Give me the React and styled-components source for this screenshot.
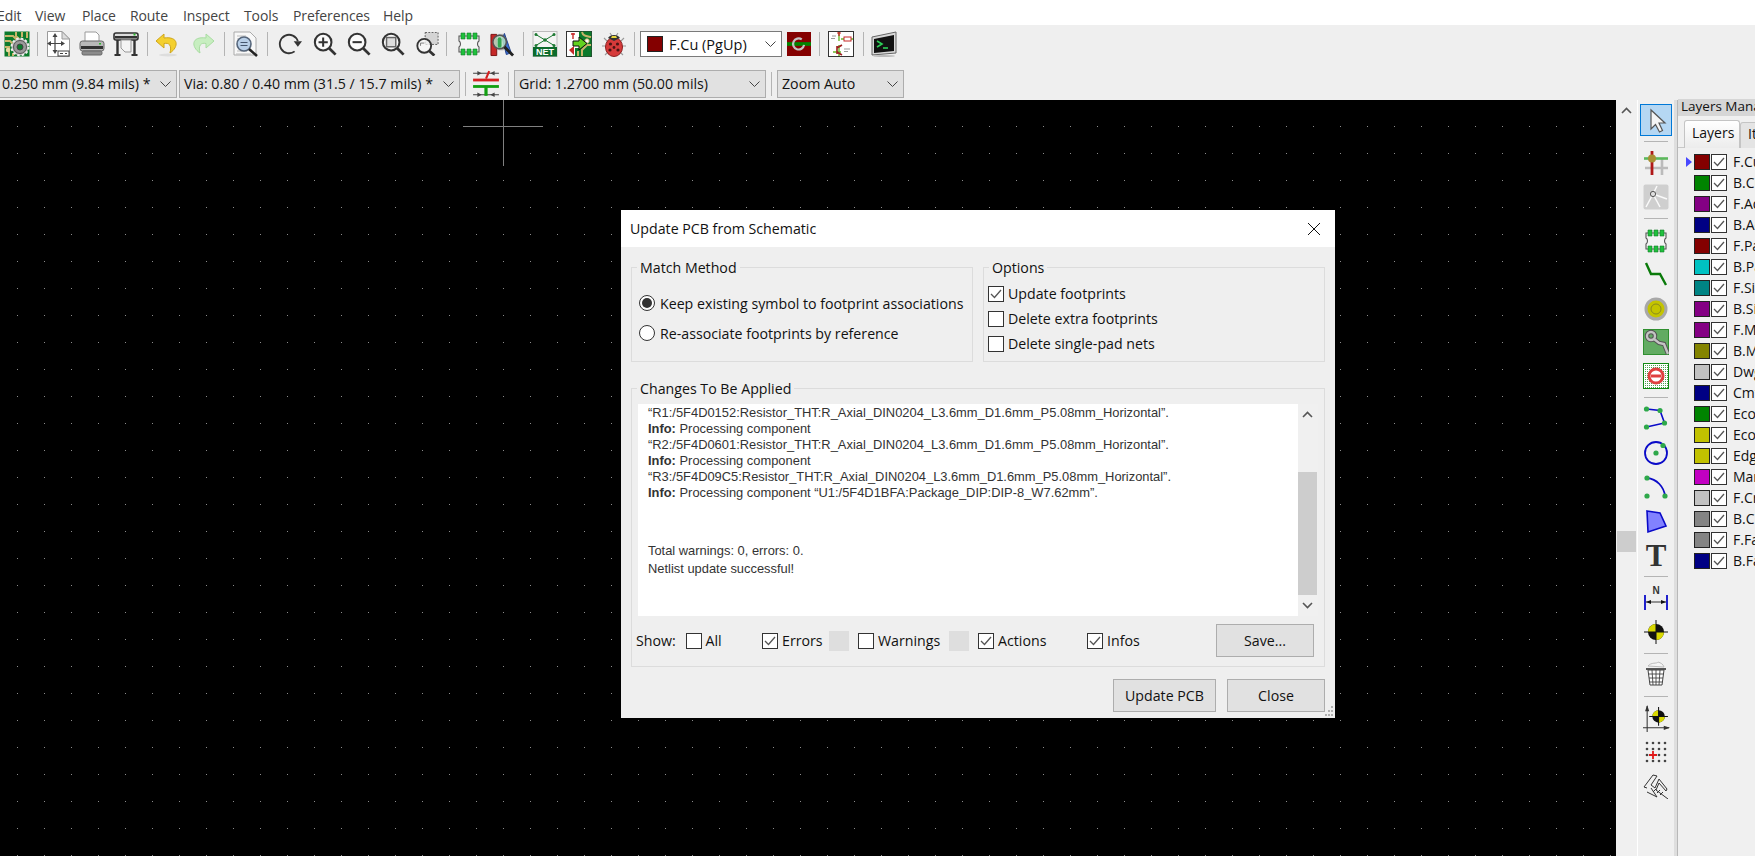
import styled, { createGlobalStyle } from 'styled-components'

const GlobalStyle = createGlobalStyle`
    html, body, #root {
        margin: 0;
        height: 100%;
        overflow: hidden;
    }
    body {
        font-family: "Open Sans", "Noto Sans", sans-serif;
        color: #111;
        background: #efefef;
    }
`

const Page = styled.div`
    display: flex;
    flex-direction: column;
    height: 856px;
    width: 1755px;
    overflow: hidden;
`

const MenuBar = styled.div`
    display: flex;
    align-items: center;
    height: 25px;
    box-sizing: border-box;
    background: #fff;
    flex: none;
    padding: 5px 0 0 35px;
    position: relative;
`

const MenuItem = styled.span`
    width: ${props => props.$w}px;
    font-size: 14px;
    letter-spacing: -0.1px;
    color: #444;
    white-space: nowrap;
    margin-left: ${props => props.$ml || 0}px;
`

const ToolRow = styled.div`
    display: flex;
    align-items: center;
    flex: none;
    height: ${props => props.$h}px;
    padding-top: ${props => props.$pt || 0}px;
    box-sizing: border-box;
    background: #efefef;
`

const Tool = styled.div`
    width: ${props => props.$w}px;
    flex: none;
    display: flex;
    align-items: center;
    justify-content: center;
`

const VSep = styled.div`
    width: ${props => props.$w}px;
    height: 24px;
    flex: none;
    display: flex;
    justify-content: center;
    &::before {
        content: '';
        width: 1px;
        background: #b4b4b4;
    }
`

const Combo = styled.div`
    width: ${props => props.$w}px;
    margin-left: ${props => props.$ml || 0}px;
    height: 28px;
    flex: none;
    box-sizing: border-box;
    display: flex;
    align-items: center;
    justify-content: space-between;
    padding: 0 5px 0 ${props => props.$pl || 4}px;
    background: #e1e1e1;
    border: 1px solid #adadad;
    font-size: 14.2px;
    white-space: nowrap;
`

const LayerCombo = styled(Combo)`
    height: 26px;
    background: #fff;
    border-color: #7a7a7a;
    padding-left: 6px;
    font-size: 14.5px;
`

const LayerPick = styled.span`
    display: flex;
    align-items: center;
    gap: 6px;
`

const Chevron = () => (
	<svg width='11' height='6' viewBox='0 0 11 6' fill='none' stroke='#444' strokeWidth='1'>
		<path d='M0.5 0.5 L5.5 5.5 L10.5 0.5' />
	</svg>
)

const Main = styled.div`
    flex: 1;
    display: flex;
    min-height: 0;
`

const Canvas = styled.div`
    flex: 1;
    min-width: 0;
    position: relative;
    overflow: hidden;
    background-color: #000;
    background-image: conic-gradient(from 270deg at 1px 1px, #8c8c8c 90deg, #000 0);
    background-size: 27px 27px;
    background-position: 17px 26px;
`

const CrossH = styled.div`
    position: absolute;
    left: 463px;
    top: 26px;
    width: 80px;
    height: 1px;
    background: #808080;
`

const CrossV = styled.div`
    position: absolute;
    left: 503px;
    top: 0;
    width: 1px;
    height: 66px;
    background: #808080;
`

const CanvasScroll = styled.div`
    width: 22px;
    box-sizing: border-box;
    flex: none;
    background: #f0f0f0;
    border-right: 1px solid #fff;
    display: flex;
    flex-direction: column;
    align-items: center;
`

const ScrollArrow = styled.div`
    width: ${props => props.$w || 19}px;
    height: 20px;
    display: flex;
    align-items: center;
    justify-content: center;
    flex: none;
`

const CanvasThumb = styled.div`
    width: 19px;
    height: 21px;
    margin-top: 411px;
    background: #cdcdcd;
`

const Rail = styled.div`
    width: 36px;
    flex: none;
    background: #f0f0f0;
    display: flex;
    flex-direction: column;
    align-items: center;
`

const RailTool = styled.div`
    height: ${props => props.$h}px;
    margin-top: ${props => props.$mt}px;
    width: 100%;
    flex: none;
    display: flex;
    align-items: center;
    justify-content: center;
`

const ActiveTool = styled.div`
    margin-top: 4px;
    width: 32px;
    height: 32px;
    box-sizing: border-box;
    flex: none;
    background: #b5d7f3;
    border: 1px solid #0078d7;
    display: flex;
    align-items: center;
    justify-content: center;
`

const RailSep = styled.div`
    width: 24px;
    height: 1px;
    flex: none;
    margin-top: ${props => props.$mt}px;
    background: #b4b4b4;
`

const Splitter = styled.div`
    width: 4px;
    box-sizing: border-box;
    flex: none;
    background: #dedede;
    border-right: 1px solid #b8b8b8;
`

const LayersPanel = styled.div`
    width: 77px;
    flex: none;
    overflow: hidden;
    background: #f0f0f0;
    margin-top: -1px;
`

const PanelTitle = styled.div`
    height: 17px;
    line-height: 15px;
    padding-left: 3px;
    background: #d6d6d6;
    font-size: 13.5px;
    white-space: nowrap;
`

const TabBar = styled.div`
    display: flex;
    align-items: flex-end;
    height: 32px;
    padding-left: 6px;
    border-bottom: 1px solid #c8c8c8;
    box-sizing: border-box;
`

const Tab = styled.div`
    flex: none;
    height: ${props => (props.$active ? 28 : 26)}px;
    width: ${props => props.$w}px;
    box-sizing: border-box;
    padding: ${props => (props.$active ? '2px 0 0 7px' : '1px 0 0 7px')};
    margin-bottom: -1px;
    font-size: 14px;
    border: 1px solid #c4c4c4;
    border-bottom: 0;
    border-radius: 3px 3px 0 0;
    background: ${props => (props.$active ? 'linear-gradient(#fff, #ececec)' : '#e4e4e4')};
    overflow: hidden;
`

const LayerList = styled.div`
    display: flex;
    flex-direction: column;
    padding: 3px 0 0 8px;
`

const LayerRow = styled.div`
    display: flex;
    align-items: center;
    height: 21px;
    white-space: nowrap;
`

const ActiveMark = styled.div`
    width: 8px;
    flex: none;
    height: 10px;
    &::before {
        content: '';
        display: ${props => (props.$on ? 'block' : 'none')};
        width: 0;
        height: 0;
        border-left: 6px solid #4848ff;
        border-top: 5px solid transparent;
        border-bottom: 5px solid transparent;
    }
`

const Swatch = styled.div`
    width: 16px;
    height: 16px;
    box-sizing: border-box;
    flex: none;
    border: 1px solid #222;
    background: ${props => props.$color};
`

const LayerName = styled.span`
    margin-left: 6px;
    font-size: 14px;
`

const CheckBox = styled.span`
    width: 16px;
    height: 16px;
    box-sizing: border-box;
    flex: none;
    border: 1px solid #333;
    background: #fff;
    display: inline-flex;
    align-items: center;
    justify-content: center;
    margin-left: ${props => props.$ml || 0}px;
`

const Tick = () => (
	<svg width='12' height='10' viewBox='0 0 12 10' fill='none' stroke='#555' strokeWidth='1.3'>
		<path d='M1 5 L4.5 8.5 L11 1' />
	</svg>
)

const Check = ({ on, ml }) => <CheckBox $ml={ml}>{on && <Tick />}</CheckBox>

const Dialog = styled.div.attrs({ role: 'dialog' })`
    position: absolute;
    left: 621px;
    top: 110px;
    width: 714px;
    height: 508px;
    background: #efefef;
    display: flex;
    flex-direction: column;
`

const TitleBar = styled.div`
    height: 37px;
    flex: none;
    background: #fff;
    display: flex;
    align-items: center;
    justify-content: space-between;
    padding: 0 14px 0 9px;
    font-size: 14.2px;
`

const DialogBody = styled.div`
    flex: 1;
    padding: 20px 10px 0;
    display: flex;
    flex-direction: column;
`

const TopGroups = styled.div`
    display: grid;
    grid-template-columns: 342px 342px;
    column-gap: 10px;
`

const GroupBox = styled.div`
    border: 1px solid #dcdcdc;
    box-sizing: border-box;
    height: ${props => props.$h}px;
    margin-top: ${props => props.$mt || 0}px;
`

const GroupLabel = styled.div`
    display: table;
    height: 22px;
    line-height: 22px;
    margin: -11px 0 0 5px;
    padding: 0 3px;
    background: #efefef;
    font-size: 14.2px;
`

const RadioList = styled.div`
    margin: 9px 0 0 7px;
`

const OptionRow = styled.label`
    display: flex;
    align-items: center;
    height: ${props => props.$h}px;
    gap: ${props => props.$gap}px;
    font-size: 14.2px;
    white-space: nowrap;
`

const RadioDot = styled.span`
    width: 16px;
    height: 16px;
    box-sizing: border-box;
    flex: none;
    border-radius: 50%;
    border: 1px solid #333;
    background: #fff;
    display: flex;
    align-items: center;
    justify-content: center;
    &::before {
        content: '';
        display: ${props => (props.$on ? 'block' : 'none')};
        width: 10px;
        height: 10px;
        border-radius: 50%;
        background: #333;
    }
`

const CheckList = styled.div`
    margin: 2px 0 0 4px;
`

const LogWrap = styled.div`
    display: flex;
    margin: 4px 0 0 6px;
    width: 680px;
    height: 212px;
`

const LogText = styled.div`
    width: 660px;
    flex: none;
    box-sizing: border-box;
    background: #fff;
    padding: 1px 0 0 10px;
    font-family: "Liberation Sans", Arial, sans-serif;
    font-size: 12.9px;
    line-height: 16px;
    color: #333;
    white-space: nowrap;
    overflow: hidden;
`

const LogLine = styled.div`
    margin-top: ${props => props.$mt || 0}px;
`

const LogScroll = styled.div`
    width: 20px;
    flex: none;
    background: #f0f0f0;
    display: flex;
    flex-direction: column;
    align-items: flex-start;
`

const LogThumb = styled.div`
    width: 19px;
    height: 123px;
    margin-top: 48px;
    background: #cdcdcd;
    flex: none;
`

const ShowRow = styled.div`
    display: grid;
    grid-template-columns: 49.5px 76.5px 67px 29px 91px 29px 109px 129px 98px;
    align-items: center;
    height: 33px;
    margin: 8px 0 0 4px;
    font-size: 14.2px;
`

const ShowItem = styled.label`
    display: flex;
    align-items: center;
    gap: 4px;
`

const ColorChip = styled.div`
    width: 20px;
    height: 20px;
    background: #dedede;
`

const PushButton = styled.button`
    height: 33px;
    width: ${props => props.$w}px;
    padding: 0;
    box-sizing: border-box;
    background: #e1e1e1;
    border: 1px solid #adadad;
    font-family: inherit;
    font-size: 14.2px;
    color: #111;
`

const DialogFooter = styled.div`
    display: flex;
    justify-content: flex-end;
    gap: 11px;
    margin-top: 12px;
`

const Grip = styled.svg`
    position: absolute;
    right: 1px;
    bottom: 2px;
`

// toolbar and tool rail drawings, all on a 26 unit grid
const I = ({ children, w = 26 }) => (
	<svg width={w} height={w} viewBox='0 0 26 26' fill='none'>{children}</svg>
)

const GearBoard = () => (
	<I>
		<rect x='0.5' y='0.5' width='25' height='25' fill='#0c7a2c' />
		<path d='M1 5 H9 L14 10 M1 10 H6 L10 14 M12 1 V5 L16 9 M18 1 V6 M23 1 V7 M1 16 H5 V25 M9 25 V22' stroke='#c9b56a' strokeWidth='2' />
		<circle cx='4' cy='19' r='2.2' fill='#e8d9a0' />
		<circle cx='16' cy='16' r='8.5' fill='#b8b8b8' stroke='#eee' strokeWidth='2' strokeDasharray='2.5 2' />
		<circle cx='16' cy='16' r='6.5' fill='#9a9a9a' stroke='#555' strokeWidth='1' />
		<circle cx='16' cy='16' r='3' fill='#0c7a2c' stroke='#444' />
	</I>
)

const BoardSetup = () => (
	<I>
		<path d='M2.5 0.5 H17 L24.5 8 V25.5 H2.5 Z' fill='#fff' stroke='#9a9a9a' />
		<path d='M17 0.5 V8 H24.5 Z' fill='#dcdcdc' stroke='#9a9a9a' />
		<path d='M10 4 V21 M3.5 12.5 H18' stroke='#444' strokeWidth='1.2' />
		<path d='M10 2 L7.5 6 H12.5 Z M10 23 L7.5 19 H12.5 Z M2 12.5 L6 10 V15 Z M20 12.5 L16 10 V15 Z' fill='#444' />
		<rect x='13' y='20' width='11' height='5' fill='#fff' stroke='#444' />
		<path d='M15 22.5 H18 M20 22.5 H22' stroke='#444' />
	</I>
)

const Printer = () => (
	<I>
		<path d='M6 1 H17 L20 4 V11 H6 Z' fill='#fff' stroke='#9a9a9a' />
		<rect x='1' y='10' width='24' height='10' rx='2.5' fill='#b9b9b9' stroke='#666' />
		<rect x='2' y='15' width='22' height='3' fill='#333' />
		<rect x='3' y='20' width='20' height='4' rx='1.5' fill='#8c8c8c' stroke='#666' />
		<rect x='20' y='12' width='2' height='1.5' fill='#2db82d' />
	</I>
)

const Plotter = () => (
	<I>
		<rect x='1' y='2' width='24' height='7' rx='2' fill='#ddd' stroke='#333' strokeWidth='1.6' />
		<rect x='2' y='5' width='22' height='2.5' fill='#333' />
		<rect x='20.5' y='2.5' width='2' height='2' fill='#2db82d' />
		<path d='M8 9 H18 V21 H12 L8 17 Z' fill='#f4f4f4' stroke='#999' />
		<path d='M4.5 9 V23 M21.5 9 V23' stroke='#333' strokeWidth='2.4' />
		<path d='M1.5 24 H7.5 M18.5 24 H24.5' stroke='#333' strokeWidth='2' />
	</I>
)

const Undo = () => (
	<I>
		<path d='M9 3 L1 10 L9 17 V12.5 C14 11.5 17 14 15 22 C24 16 24 5 9 7 Z' fill='#f4d02f' stroke='#cfa61c' strokeWidth='1' />
		<ellipse cx='13' cy='24' rx='9' ry='1.5' fill='#ddd' />
	</I>
)

const Redo = () => (
	<I>
		<path d='M17 3 L25 10 L17 17 V12.5 C12 11.5 9 14 11 22 C2 16 2 5 17 7 Z' fill='#c7eec0' stroke='#a9dca2' strokeWidth='1' />
	</I>
)

const FindDoc = () => (
	<I>
		<path d='M1 1 H17 L23 7 V24 H1 Z' fill='#f8f8f8' stroke='#aaa' />
		<path d='M4 5 H13 M4 8 H8 M4 20 H14 M3 23 H18' stroke='#bbb' />
		<circle cx='11' cy='13' r='7' fill='#b8cfe8' stroke='#55657a' strokeWidth='1.6' />
		<path d='M7.5 11.5 H14.5 M7.5 14.5 H14.5' stroke='#44566e' strokeWidth='1.2' />
		<path d='M16 18 L24 25' stroke='#222' strokeWidth='2.6' />
	</I>
)

const Refresh = () => (
	<I w={24}>
		<path d='M18 21 A10 10 0 1 1 21.5 10' stroke='#333' strokeWidth='2' />
		<path d='M17 10 H26 L21.5 16 Z' fill='#333' />
	</I>
)

const Glass = ({ children }) => (
	<I w={24}>
		<circle cx='11' cy='11' r='9' fill='#fafafa' stroke='#333' strokeWidth='2.2' />
		<path d='M17.5 17.5 L24.5 24.5' stroke='#333' strokeWidth='3' />
		{children}
	</I>
)

const ZoomIn = () => <Glass><path d='M6 11 H16 M11 6 V16' stroke='#333' strokeWidth='2.2' /></Glass>
const ZoomOut = () => <Glass><path d='M6 11 H16' stroke='#333' strokeWidth='2.2' /></Glass>
const ZoomFit = () => <Glass><rect x='6' y='6' width='10' height='10' fill='#ddd' stroke='#666' strokeWidth='1.6' /></Glass>

const ZoomSel = () => (
	<I w={24}>
		<rect x='11' y='0.5' width='14' height='13' fill='#d4d4d4' stroke='#555' strokeDasharray='2 1.5' />
		<circle cx='10' cy='15' r='7.5' fill='#fafafa' fillOpacity='0.7' stroke='#333' strokeWidth='2' />
		<path d='M15.5 20.5 L21 25.5' stroke='#333' strokeWidth='3' />
		<path d='M6 12 V15 M6 12 H10' stroke='#777' />
	</I>
)

const Chip = () => (
	<I>
		<path d='M3 5 H23 V10 C21 11 21 15 23 16 V21 H3 V16 C5 15 5 11 3 10 Z' fill='#f4f4f4' stroke='#555' strokeWidth='1.1' />
		<path d='M5 2 H9 V8 H5 Z M11 2 H15 V8 H11 Z M17 2 H21 V8 H17 Z M5 18 H9 V24 H5 Z M11 18 H15 V24 H11 Z M17 18 H21 V24 H17 Z' fill='#1fc13c' stroke='#157a28' strokeWidth='0.6' />
	</I>
)

const NetInspect = () => (
	<I>
		<path d='M1 3 H7 V25 H1 Z' fill='#c62828' stroke='#7a1414' />
		<path d='M9 3 H14 V19 H9 Z' fill='#e8e8e8' stroke='#aaa' />
		<path d='M15 2 L22 22 L17 24 L13 8 Z' fill='#3b6fd4' stroke='#22428a' />
		<circle cx='10' cy='11' r='7' fill='#b8e0c8' fillOpacity='0.85' stroke='#555' strokeWidth='1.6' />
		<rect x='8' y='6' width='4' height='11' rx='2' fill='#33a852' />
		<path d='M15 16 L24 25' stroke='#222' strokeWidth='3' />
	</I>
)

const NetIcon = () => (
	<I>
		<rect x='1' y='0.5' width='24' height='25' fill='#f4f4f4' stroke='#bbb' />
		<path d='M3 3 L13 9 L23 3 M3 15 L13 9 L23 15' stroke='#1f7a34' strokeWidth='1' />
		<circle cx='13' cy='9' r='1.8' fill='#1f7a34' />
		<circle cx='4' cy='3.5' r='1.5' fill='#1f7a34' />
		<circle cx='22' cy='3.5' r='1.5' fill='#1f7a34' />
		<circle cx='4' cy='14.5' r='1.5' fill='#1f7a34' />
		<circle cx='22' cy='14.5' r='1.5' fill='#1f7a34' />
		<rect x='1' y='16' width='24' height='9.5' fill='#0c6b2c' />
		<text x='13' y='24.3' fontFamily='Liberation Sans' fontSize='9' fontWeight='700' fill='#fff' textAnchor='middle'>NET</text>
	</I>
)

const UpdatePcb = () => (
	<I>
		<rect x='0.5' y='0.5' width='25' height='25' fill='#fff' stroke='#333' />
		<path d='M13 0.5 H25.5 V25.5 H9 V17 H13 Z' fill='#0c7a2c' />
		<path d='M16 1 C17 5 20 5 25 6 M16 25 V19 L21 14 H25 M12 25 V20' stroke='#c9b56a' strokeWidth='2' />
		<circle cx='21' cy='10' r='2.2' fill='#fff' stroke='#c9b56a' />
		<path d='M7 2 V8 M5 3 H9' stroke='#c62828' strokeWidth='1.4' />
		<path d='M3 19 L8 15 V24 Z' fill='#c62828' />
		<path d='M7 10 H13 V6 L21 12.5 L13 19 V15 H7 Z' fill='#62d21f' stroke='#111' strokeWidth='1' />
	</I>
)

const Bug = () => (
	<I>
		<path d='M3 7 L8 12 M23 7 L18 12 M1 15 H6 M25 15 H20 M4 24 L8 20 M22 24 L18 20 M9 2 L11 5 M17 2 L15 5' stroke='#999' strokeWidth='1.1' />
		<ellipse cx='13' cy='16' rx='8.5' ry='9.5' fill='#d63a3a' stroke='#8a2020' />
		<path d='M7 7 C9 3 17 3 19 7 L13 10 Z' fill='#333' />
		<path d='M11 5 L15 5 L16 7 L10 7 Z' fill='#e8d53a' />
		<circle cx='9.5' cy='13' r='1.6' fill='#4a1414' />
		<circle cx='16.5' cy='13' r='1.6' fill='#4a1414' />
		<circle cx='9' cy='19' r='1.6' fill='#4a1414' />
		<circle cx='17' cy='19' r='1.6' fill='#4a1414' />
		<circle cx='13' cy='16.5' r='1.4' fill='#4a1414' />
	</I>
)

const LayerPair = () => (
	<I w={24}>
		<rect x='0' y='0' width='26' height='26' fill='#840000' />
		<rect x='0' y='11' width='26' height='4' fill='#008400' />
		<path d='M16 8 A6 6 0 1 0 18.5 14' stroke='#c2c2c2' strokeWidth='2.4' />
	</I>
)

const SchIcon = () => (
	<I>
		<rect x='0.5' y='0.5' width='25' height='25' fill='#fff' stroke='#333' />
		<path d='M11 1 V10 M11 14 V25 M5 21 H13 M13 8 H25' stroke='#6ab82a' strokeWidth='1.4' />
		<path d='M11 1 V5' stroke='#c62828' strokeWidth='1.4' />
		<rect x='16' y='6' width='7' height='4' fill='#fff' stroke='#c62828' />
		<path d='M9 2 H13' stroke='#c62828' />
		<path d='M9 15 V23 M9 17 L14 14 M9 21 L14 24' stroke='#9c2020' strokeWidth='1.6' />
		<path d='M4 5 H8 M3 7.5 H7 M16 18 H22 M16 20.5 H20' stroke='#999' />
	</I>
)

const Terminal = () => (
	<I>
		<path d='M1 6 L25 1 V22 L1 24 Z' fill='#d8d8d8' stroke='#666' />
		<path d='M3 8 L23 4 V20 L3 22 Z' fill='#111' />
		<path d='M6 10 L11 13 L6 16' stroke='#2ed158' strokeWidth='1.6' />
		<path d='M12 17 H17' stroke='#2ed158' strokeWidth='1.6' />
		<ellipse cx='13' cy='25' rx='11' ry='1' fill='#bbb' />
	</I>
)

const ViaSwap = () => (
	<I w={28}>
		<path d='M1 3 H25 M1 23 H25' stroke='#444' strokeWidth='1' />
		<path d='M9 3 L5 1 V5 Z M17 3 L21 1 V5 Z M9 23 L5 21 V25 Z M17 23 L21 21 V25 Z' fill='#444' />
		<path d='M13 8 L16 1' stroke='#d42020' strokeWidth='2' />
		<rect x='1' y='8' width='24' height='2.6' fill='#d42020' />
		<rect x='1' y='14' width='24' height='2.6' fill='#12a012' />
		<path d='M13 15 V24' stroke='#12a012' strokeWidth='3' />
	</I>
)

const Cursor = () => (
	<I>
		<path d='M8 3 V22 L12.5 17.5 L16.5 25 L19.5 23.5 L16 16 L22 16 Z' fill='#f4f4f4' stroke='#555' strokeWidth='1.2' />
	</I>
)

const RouteGrid = () => (
	<I>
		<path d='M2 18 H25 M19 9 V25' stroke='#bbb' strokeWidth='2.6' />
		<path d='M1 8.5 H25' stroke='#5cb85c' strokeWidth='2.6' />
		<path d='M9 1 V25' stroke='#b01818' strokeWidth='2.8' />
		<circle cx='9' cy='8.5' r='4' fill='#a89034' />
	</I>
)

const AutoPlace = () => (
	<I>
		<rect x='0.5' y='0.5' width='25' height='25' rx='2' fill='#cfcfcf' />
		<path d='M10 10 L14 2 M10 10 L24 15 M10 10 L3 23 M10 10 L17 23' stroke='#fafafa' strokeWidth='1.5' />
		<circle cx='10' cy='10' r='2.6' fill='#e0e0e0' stroke='#555' />
	</I>
)

const Track = () => (
	<I><path d='M3 2 L8 13 H17 L23 24' stroke='#0a7a0a' strokeWidth='2.4' /></I>
)

const Via = () => (
	<I>
		<circle cx='13' cy='13' r='10' fill='#c4c400' stroke='#a8a8a8' strokeWidth='3' />
		<circle cx='13' cy='13' r='5' stroke='#8a8a20' strokeWidth='1' />
	</I>
)

const Zone = () => (
	<I>
		<rect x='0.5' y='0.5' width='25' height='25' fill='#62ab62' stroke='#2f8f2f' />
		<g stroke='#555' strokeWidth='4.4'>
			<circle cx='8' cy='7' r='4' />
			<path d='M11 10 L16 14 L21 15 L25 25' />
		</g>
		<g stroke='#c4c4c4' strokeWidth='2.4'>
			<circle cx='8' cy='7' r='4' />
			<path d='M11 10 L16 14 L21 15 L25 25' />
		</g>
	</I>
)

const KeepOut = () => (
	<I>
		<defs>
			<pattern id='hatch' width='2' height='2' patternUnits='userSpaceOnUse'>
				<rect width='1' height='1' fill='#4ea04e' />
			</pattern>
		</defs>
		<rect x='0.5' y='0.5' width='25' height='25' fill='#fff' />
		<rect x='0.5' y='0.5' width='25' height='25' fill='url(#hatch)' stroke='#118a11' />
		<circle cx='13' cy='13' r='7' fill='#fff' stroke='#e04040' strokeWidth='3' />
		<path d='M8 13 H18' stroke='#e04040' strokeWidth='3' />
	</I>
)

const Node = ({ x, y }) => <circle cx={x} cy={y} r='2.6' fill='#2ea84a' />

const PolyLine = () => (
	<I>
		<path d='M3.5 3 L17 4.5 L21.5 17 L3.5 21' stroke='#0a0ac8' strokeWidth='1.6' />
		<Node x={3.5} y={3} /><Node x={17} y={4.5} /><Node x={21.5} y={17} /><Node x={3.5} y={21} />
	</I>
)

const CircleTool = () => (
	<I>
		<circle cx='13' cy='13' r='11' stroke='#0a0ac8' strokeWidth='1.8' />
		<Node x={13} y={13} /><Node x={20} y={5.5} />
	</I>
)

const ArcTool = () => (
	<I>
		<path d='M4 4 C14 5 21 13 22 22' stroke='#0a0ac8' strokeWidth='1.8' />
		<Node x={4} y={4} /><Node x={4} y={22} /><Node x={22} y={22} />
	</I>
)

const PolygonTool = () => (
	<I><path d='M4 3 L17 5 L23 18 L5 24 Z' fill='#8282ff' stroke='#0a0ac8' strokeWidth='1.6' /></I>
)

const TextTool = styled.span`
    font-family: "Liberation Serif", serif;
    font-weight: 700;
    font-size: 31px;
    line-height: 22px;
    color: #333;
`

const Dimension = () => (
	<I>
		<text x='13' y='9' fontFamily='Liberation Sans' fontSize='10' fontWeight='700' fill='#333' textAnchor='middle'>N</text>
		<path d='M2 10 V25 M24 10 V25' stroke='#0a0ac8' strokeWidth='1.8' />
		<path d='M3 17 H23' stroke='#333' />
		<path d='M3 17 L8 15 V19 Z M23 17 L18 15 V19 Z' fill='#111' />
	</I>
)

const Target = ({ cx = 13, cy = 13, r = 8, arm = 12 }) => (
	<g>
		<circle cx={cx} cy={cy} r={r} fill='#111' />
		<path d={`M${cx} ${cy} V${cy - r} A${r} ${r} 0 0 0 ${cx - r} ${cy} Z M${cx} ${cy} V${cy + r} A${r} ${r} 0 0 0 ${cx + r} ${cy} Z`} fill='#d8d800' />
		<path d={`M${cx - arm} ${cy} H${cx + arm} M${cx} ${cy - arm} V${cy + arm}`} stroke='#111' strokeWidth='1' />
	</g>
)

const TargetIcon = () => <I><Target /></I>

const Trash = () => (
	<I>
		<path d='M5 5 C8 1 14 3 15 1 C18 2 20 3 21 6 Z' fill='#f4f4f4' stroke='#bbb' />
		<path d='M3 8 H23' stroke='#444' strokeWidth='1.8' />
		<path d='M5 9 L7 24 H19 L21 9 Z' fill='#fff' stroke='#444' />
		<path d='M5.5 13 H20.5 M6 17 H20 M6.5 21 H19.5 M9 9 L10 24 M13 9 V24 M17 9 L16 24' stroke='#444' strokeWidth='0.9' />
	</I>
)

const Origin = () => (
	<I w={27}>
		<path d='M4 1 V26 M0 22 H25' stroke='#333' strokeWidth='1' />
		<path d='M4 0 L2 6 H6 Z M26 22 L20 20 V24 Z' fill='#333' />
		<Target cx={15} cy={11} r={6} arm={9} />
	</I>
)

const GridOrigin = () => {
	const dots = []
	for (const x of [3, 9, 15, 21]) {
		for (const y of [3, 9, 15, 21]) dots.push(<circle key={`${x}-${y}`} cx={x + 1} cy={y + 1} r='1.3' fill='#444' />)
	}
	return (
		<I>
			{dots}
			<path d='M10 12 V20 M6 16 H14' stroke='#e01818' strokeWidth='1.8' />
		</I>
	)
}

const Measure = () => (
	<I>
		<path d='M1 14 L10 2 L14 3 L8 12 L12 15 L16 6 L24 16 L23 18 L16 10 L13 17 L25 26 M4 15 L1 14 M4 19 L14 24 L8 15 M10 19 L13 16 M14 20 L17 17 M17 22 L20 19' stroke='#333' strokeWidth='1' />
	</I>
)

const Caret = ({ dir }) => (
	<svg width='11' height='7' viewBox='0 0 11 7' fill='none' stroke='#555' strokeWidth='1.6'>
		<path d={dir === 'up' ? 'M1 6 L5.5 1.5 L10 6' : 'M1 1 L5.5 5.5 L10 1'} />
	</svg>
)

const railItems = [
	{ sep: 5 },
	{ icon: <RouteGrid />, h: 25, mt: 8 },
	{ icon: <AutoPlace />, h: 26, mt: 9 },
	{ sep: 8 },
	{ icon: <Chip />, h: 23, mt: 10 },
	{ icon: <Track />, h: 22, mt: 11 },
	{ icon: <Via />, h: 22, mt: 13 },
	{ icon: <Zone />, h: 25, mt: 9 },
	{ icon: <KeepOut />, h: 26, mt: 9 },
	{ sep: 8 },
	{ icon: <PolyLine />, h: 25, mt: 8 },
	{ icon: <CircleTool />, h: 24, mt: 10 },
	{ icon: <ArcTool />, h: 25, mt: 9 },
	{ icon: <PolygonTool />, h: 20, mt: 12 },
	{ icon: <TextTool>T</TextTool>, h: 22, mt: 14 },
	{ sep: 9 },
	{ icon: <Dimension />, h: 24, mt: 9 },
	{ icon: <TargetIcon />, h: 24, mt: 10 },
	{ sep: 9 },
	{ icon: <Trash />, h: 24, mt: 8 },
	{ sep: 10 },
	{ icon: <Origin />, h: 27, mt: 8 },
	{ icon: <GridOrigin />, h: 22, mt: 9 },
	{ icon: <Measure />, h: 26, mt: 10 },
]

const layers = [
	['F.Cu', '#840000'],
	['B.Cu', '#008400'],
	['F.Adhes', '#840084'],
	['B.Adhes', '#000084'],
	['F.Paste', '#840000'],
	['B.Paste', '#00c2c2'],
	['F.SilkS', '#008484'],
	['B.SilkS', '#840084'],
	['F.Mask', '#840084'],
	['B.Mask', '#848400'],
	['Dwgs.User', '#c2c2c2'],
	['Cmts.User', '#000084'],
	['Eco1.User', '#008400'],
	['Eco2.User', '#c2c200'],
	['Edge.Cuts', '#c2c200'],
	['Margin', '#c200c2'],
	['F.CrtYd', '#c2c2c2'],
	['B.CrtYd', '#848484'],
	['F.Fab', '#848484'],
	['B.Fab', '#000084'],
]

const logLines = [
	<LogLine key='r1'>“R1:/5F4D0152:Resistor_THT:R_Axial_DIN0204_L3.6mm_D1.6mm_P5.08mm_Horizontal”.</LogLine>,
	<LogLine key='i1'><b>Info:</b> Processing component</LogLine>,
	<LogLine key='r2'>“R2:/5F4D0601:Resistor_THT:R_Axial_DIN0204_L3.6mm_D1.6mm_P5.08mm_Horizontal”.</LogLine>,
	<LogLine key='i2'><b>Info:</b> Processing component</LogLine>,
	<LogLine key='r3'>“R3:/5F4D09C5:Resistor_THT:R_Axial_DIN0204_L3.6mm_D1.6mm_P5.08mm_Horizontal”.</LogLine>,
	<LogLine key='i3'><b>Info:</b> Processing component “U1:/5F4D1BFA:Package_DIP:DIP-8_W7.62mm”.</LogLine>,
	<LogLine key='t' $mt={42}>Total warnings: 0, errors: 0.</LogLine>,
	<LogLine key='n' $mt={2}>Netlist update successful!</LogLine>,
]

export default function App() {
	return (
		<Page>
			<GlobalStyle />
			<MenuBar>
				<MenuItem $ml={-38} $w={38}>Edit</MenuItem>
				<MenuItem $w={47}>View</MenuItem>
				<MenuItem $w={48}>Place</MenuItem>
				<MenuItem $w={53}>Route</MenuItem>
				<MenuItem $w={61}>Inspect</MenuItem>
				<MenuItem $w={49}>Tools</MenuItem>
				<MenuItem $w={90}>Preferences</MenuItem>
				<MenuItem $w={40}>Help</MenuItem>
			</MenuBar>
			<ToolRow $h={38}>
				<Tool $w={33}><GearBoard /></Tool>
				<VSep $w={8} />
				<Tool $w={34}><BoardSetup /></Tool>
				<Tool $w={33}><Printer /></Tool>
				<Tool $w={35}><Plotter /></Tool>
				<VSep $w={8} />
				<Tool $w={33}><Undo /></Tool>
				<Tool $w={36}><Redo /></Tool>
				<VSep $w={8} />
				<Tool $w={35}><FindDoc /></Tool>
				<VSep $w={8} />
				<Tool $w={37}><Refresh /></Tool>
				<Tool $w={34}><ZoomIn /></Tool>
				<Tool $w={34}><ZoomOut /></Tool>
				<Tool $w={34}><ZoomFit /></Tool>
				<Tool $w={34}><ZoomSel /></Tool>
				<VSep $w={4} />
				<Tool $w={42}><Chip /></Tool>
				<Tool $w={25}><NetInspect /></Tool>
				<VSep $w={16} />
				<Tool $w={28}><NetIcon /></Tool>
				<Tool $w={40}><UpdatePcb /></Tool>
				<Tool $w={29}><Bug /></Tool>
				<VSep $w={12} />
				<LayerCombo $w={142}>
					<LayerPick><Swatch $color='#840000' />F.Cu (PgUp)</LayerPick>
					<Chevron />
				</LayerCombo>
				<Tool $w={34}><LayerPair /></Tool>
				<VSep $w={6} />
				<Tool $w={38}><SchIcon /></Tool>
				<VSep $w={6} />
				<Tool $w={36}><Terminal /></Tool>
			</ToolRow>
			<ToolRow $h={37} $pt={4}>
				<Combo $w={182} $ml={-5} $pl={6}>0.250 mm (9.84 mils) *<Chevron /></Combo>
				<Combo $w={281} $ml={2}>Via: 0.80 / 0.40 mm (31.5 / 15.7 mils) *<Chevron /></Combo>
				<VSep $w={10} />
				<Tool $w={32}><ViaSwap /></Tool>
				<VSep $w={12} />
				<Combo $w={252}>Grid: 1.2700 mm (50.00 mils)<Chevron /></Combo>
				<VSep $w={11} />
				<Combo $w={127}>Zoom Auto<Chevron /></Combo>
			</ToolRow>
			<Main>
				<Canvas>
					<CrossH />
					<CrossV />
					<Dialog>
						<TitleBar>
							Update PCB from Schematic
							<svg width='14' height='14' viewBox='0 0 14 14' stroke='#111' strokeWidth='1'>
								<path d='M1 1 L13 13 M13 1 L1 13' />
							</svg>
						</TitleBar>
						<DialogBody>
							<TopGroups>
								<GroupBox $h={95}>
									<GroupLabel>Match Method</GroupLabel>
									<RadioList>
										<OptionRow $h={30} $gap={5}><RadioDot $on />Keep existing symbol to footprint associations</OptionRow>
										<OptionRow $h={30} $gap={5}><RadioDot />Re-associate footprints by reference</OptionRow>
									</RadioList>
								</GroupBox>
								<GroupBox $h={95}>
									<GroupLabel>Options</GroupLabel>
									<CheckList>
										<OptionRow $h={25} $gap={4}><Check on />Update footprints</OptionRow>
										<OptionRow $h={25} $gap={4}><Check />Delete extra footprints</OptionRow>
										<OptionRow $h={25} $gap={4}><Check />Delete single-pad nets</OptionRow>
									</CheckList>
								</GroupBox>
							</TopGroups>
							<GroupBox $h={279} $mt={26}>
								<GroupLabel>Changes To Be Applied</GroupLabel>
								<LogWrap>
									<LogText>{logLines}</LogText>
									<LogScroll>
										<ScrollArrow><Caret dir='up' /></ScrollArrow>
										<LogThumb />
										<ScrollArrow><Caret dir='down' /></ScrollArrow>
									</LogScroll>
								</LogWrap>
								<ShowRow>
									<span>Show:</span>
									<ShowItem><Check />All</ShowItem>
									<ShowItem><Check on />Errors</ShowItem>
									<ColorChip />
									<ShowItem><Check />Warnings</ShowItem>
									<ColorChip />
									<ShowItem><Check on />Actions</ShowItem>
									<ShowItem><Check on />Infos</ShowItem>
									<PushButton $w={98}>Save...</PushButton>
								</ShowRow>
							</GroupBox>
							<DialogFooter>
								<PushButton $w={103}>Update PCB</PushButton>
								<PushButton $w={98}>Close</PushButton>
							</DialogFooter>
						</DialogBody>
						<Grip width='9' height='10' viewBox='0 0 9 10' fill='#b0b0b0'>
							<path d='M6 0 h2 v2 h-2 Z M3 4 h2 v2 h-2 Z M6 4 h2 v2 h-2 Z M0 8 h2 v2 h-2 Z M3 8 h2 v2 h-2 Z M6 8 h2 v2 h-2 Z' />
						</Grip>
					</Dialog>
				</Canvas>
				<CanvasScroll>
					<ScrollArrow><Caret dir='up' /></ScrollArrow>
					<CanvasThumb />
				</CanvasScroll>
				<Rail>
					<ActiveTool><Cursor /></ActiveTool>
					{railItems.map((item, i) => (
						item.sep
							? <RailSep key={i} $mt={item.sep} />
							: <RailTool key={i} $h={item.h} $mt={item.mt}>{item.icon}</RailTool>
					))}
				</Rail>
				<Splitter />
				<LayersPanel>
					<PanelTitle>Layers Manager</PanelTitle>
					<TabBar>
						<Tab $active $w={56}>Layers</Tab>
						<Tab $w={40}>Items</Tab>
					</TabBar>
					<LayerList>
						{layers.map(([name, color], i) => (
							<LayerRow key={name}>
								<ActiveMark $on={i === 0} />
								<Swatch $color={color} />
								<Check on ml={1} />
								<LayerName>{name}</LayerName>
							</LayerRow>
						))}
					</LayerList>
				</LayersPanel>
			</Main>
		</Page>
	)
}
